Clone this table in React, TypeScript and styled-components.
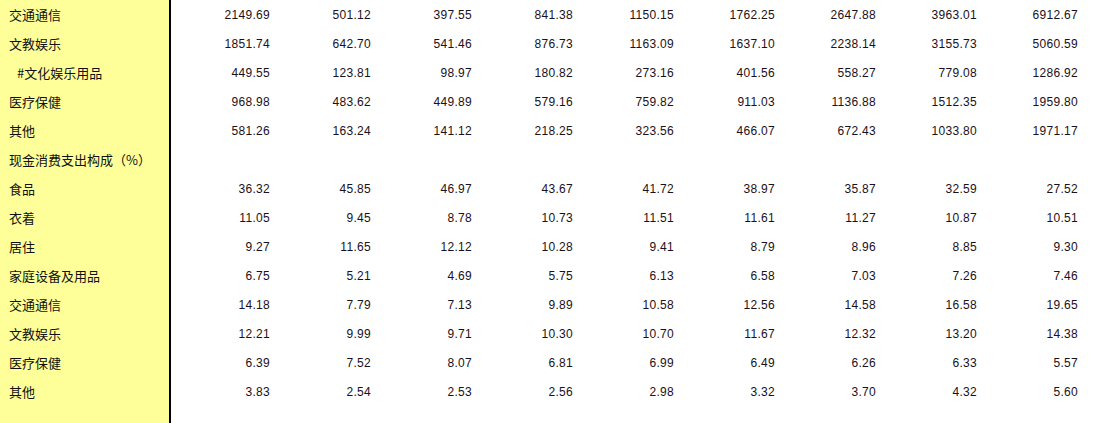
import React from "react";
import styled, { createGlobalStyle } from "styled-components";

const GlobalStyle = createGlobalStyle`
  html, body, #root {
    height: 100%;
  }
  body {
    margin: 0;
    background: #ffffff;
  }
`;

type Row = {
  label: string;
  indent?: boolean;
  values?: string[];
};

const rows: Row[] = [
  { label: "交通通信", values: ["2149.69", "501.12", "397.55", "841.38", "1150.15", "1762.25", "2647.88", "3963.01", "6912.67"] },
  { label: "文教娱乐", values: ["1851.74", "642.70", "541.46", "876.73", "1163.09", "1637.10", "2238.14", "3155.73", "5060.59"] },
  { label: "#文化娱乐用品", indent: true, values: ["449.55", "123.81", "98.97", "180.82", "273.16", "401.56", "558.27", "779.08", "1286.92"] },
  { label: "医疗保健", values: ["968.98", "483.62", "449.89", "579.16", "759.82", "911.03", "1136.88", "1512.35", "1959.80"] },
  { label: "其他", values: ["581.26", "163.24", "141.12", "218.25", "323.56", "466.07", "672.43", "1033.80", "1971.17"] },
  { label: "现金消费支出构成（%）" },
  { label: "食品", values: ["36.32", "45.85", "46.97", "43.67", "41.72", "38.97", "35.87", "32.59", "27.52"] },
  { label: "衣着", values: ["11.05", "9.45", "8.78", "10.73", "11.51", "11.61", "11.27", "10.87", "10.51"] },
  { label: "居住", values: ["9.27", "11.65", "12.12", "10.28", "9.41", "8.79", "8.96", "8.85", "9.30"] },
  { label: "家庭设备及用品", values: ["6.75", "5.21", "4.69", "5.75", "6.13", "6.58", "7.03", "7.26", "7.46"] },
  { label: "交通通信", values: ["14.18", "7.79", "7.13", "9.89", "10.58", "12.56", "14.58", "16.58", "19.65"] },
  { label: "文教娱乐", values: ["12.21", "9.99", "9.71", "10.30", "10.70", "11.67", "12.32", "13.20", "14.38"] },
  { label: "医疗保健", values: ["6.39", "7.52", "8.07", "6.81", "6.99", "6.49", "6.26", "6.33", "5.57"] },
  { label: "其他", values: ["3.83", "2.54", "2.53", "2.56", "2.98", "3.32", "3.70", "4.32", "5.60"] },
];

function App() {
  return (
    <>
      <GlobalStyle />
      <Sheet>
        {rows.map((r, i) => (
          <TableRow key={i}>
            <LabelCell $indent={r.indent}>{r.label}</LabelCell>
            {(r.values || Array(9).fill("")).map((v, j) => (
              <ValueCell key={j}>{v}</ValueCell>
            ))}
          </TableRow>
        ))}
        <FillerRow>
          <LabelCell />
        </FillerRow>
      </Sheet>
    </>
  );
}

export default App;

const Sheet = styled.div`
  display: flex;
  flex-direction: column;
  height: 100%;
  min-height: 423px;
`;

const TableRow = styled.div`
  display: flex;
  height: 29px;
`;

const FillerRow = styled.div`
  display: flex;
  flex: 1;
`;

const LabelCell = styled.div<{ $indent?: boolean }>`
  box-sizing: border-box;
  width: 171px;
  flex-shrink: 0;
  background: #ffff99;
  border-right: 2px solid #000000;
  padding-left: ${(p) => (p.$indent ? "17px" : "9px")};
  display: flex;
  align-items: center;
  font-family: "Noto Sans CJK SC", "Noto Sans", sans-serif;
  font-size: 13px;
  color: #111111;
  white-space: nowrap;
`;

const ValueCell = styled.div`
  box-sizing: border-box;
  width: 101px;
  flex-shrink: 0;
  padding-right: 2px;
  display: flex;
  align-items: center;
  justify-content: flex-end;
  font-family: "Liberation Sans", Arial, sans-serif;
  font-size: 12px;
  letter-spacing: 0.3px;
  color: #1a1020;
`;
